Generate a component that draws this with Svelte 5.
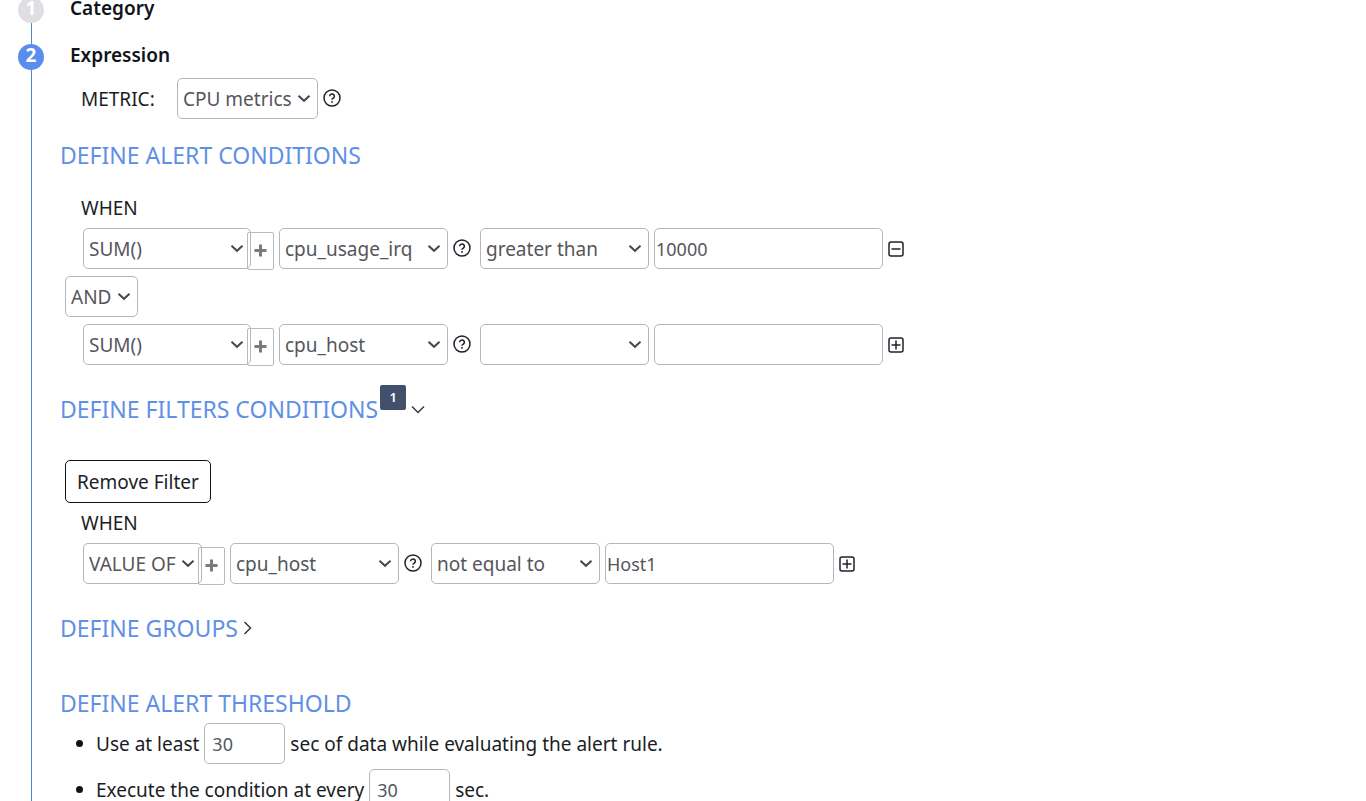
<script>
  let metric = $state('CPU metrics');
  let joiner = $state('AND');
  let conditions = $state([
    { id: 'c1', fn: 'SUM()', field: 'cpu_usage_irq', op: 'greater than', value: '10000', action: 'remove' },
    { id: 'c2', fn: 'SUM()', field: 'cpu_host', op: '', value: '', action: 'add' }
  ]);
  let filters = $state([
    { id: 'f1', fn: 'VALUE OF', field: 'cpu_host', op: 'not equal to', value: 'Host1', action: 'add' }
  ]);
  let period = $state('30');
  let every = $state('30');
</script>

{#snippet picker(value, label, kind)}
  <span class="picker {kind}">
    <select aria-label={label}><option>{value}</option></select>
    <svg class="caret" viewBox="0 0 14 9" aria-hidden="true"><path d="M1.500 1.800 7 6.800l5.500-5" /></svg>
  </span>
{/snippet}

{#snippet help()}
  <button class="icon help" type="button" aria-label="Help">
    <svg width="18" height="18" viewBox="0 0 18 18" aria-hidden="true">
      <circle cx="9" cy="9" r="8" />
      <path d="M6.600 7.200a2.400 2.200 0 1 1 3.800 1.800C9.500 9.600 9 9.900 9 10.700" />
      <circle class="dot" cx="9" cy="12.900" r="0.900" />
    </svg>
  </button>
{/snippet}

{#snippet rule(row, wide)}
  <div class="rule">
    {@render picker(row.fn, 'Function', wide ? 'fn' : 'auto')}
    <button class="plus" type="button" aria-label="Add function">
      <svg width="13" height="13" viewBox="0 0 13 13" aria-hidden="true"><path d="M6.500 0.500v12M0.500 6.500h12" /></svg>
    </button>
    {@render picker(row.field, 'Field', 'field')}
    {@render help()}
    {@render picker(row.op, 'Operator', 'field op')}
    <input class="value" type="text" aria-label="Value" bind:value={row.value} />
    <button class="icon" type="button" aria-label={row.action}>
      <svg width="16" height="16" viewBox="0 0 16 16" aria-hidden="true">
        <rect x="1" y="1" width="14" height="14" rx="2" />
        <path d={row.action === 'add' ? 'M3.500 8h9M8 3.500v9' : 'M3.500 8h9'} />
      </svg>
    </button>
  </div>
{/snippet}

<main>
  <section class="step">
    <div class="rail"><span class="marker idle">1</span></div>
    <div class="body"><h2>Category</h2></div>
  </section>

  <section class="step">
    <div class="rail"><span class="marker">2</span></div>
    <div class="body">
      <h2>Expression</h2>

      <div class="metric">
        <span class="caption">METRIC:</span>
        {@render picker(metric, 'Metric', 'auto')}
        {@render help()}
      </div>

      <h3 class="conditions">DEFINE ALERT CONDITIONS</h3>
      <p class="when">WHEN</p>
      <div class="rules">
        {@render rule(conditions[0], true)}
        <div class="joiner">{@render picker(joiner, 'Join', 'auto')}</div>
        {@render rule(conditions[1], true)}
      </div>

      <h3 class="filters">
        DEFINE FILTERS CONDITIONS<span class="badge">1</span>
        <svg class="chevron" width="14" height="9" viewBox="0 0 14 9" aria-hidden="true"><path d="M1 1.500 7 7.500l6-6" /></svg>
      </h3>
      <button class="remove" type="button">Remove Filter</button>
      <p class="when">WHEN</p>
      <div class="rules">{@render rule(filters[0], false)}</div>

      <h3 class="groups">
        DEFINE GROUPS
        <svg class="chevron" width="9" height="14" viewBox="0 0 9 14" aria-hidden="true"><path d="M1.500 1 7.500 7l-6 6" /></svg>
      </h3>

      <h3 class="threshold">DEFINE ALERT THRESHOLD</h3>
      <ul>
        <li>
          <label for="period">Use at least</label>
          <input id="period" class="seconds" type="text" bind:value={period} />
          <span>sec of data while evaluating the alert rule.</span>
        </li>
        <li>
          <label for="every">Execute the condition at every</label>
          <input id="every" class="seconds" type="text" bind:value={every} />
          <span>sec.</span>
        </li>
      </ul>
    </div>
  </section>
</main>

<style>
  :global(body) {
    margin: 0;
    background: #fff;
  }

  main {
    margin-top: -3px;
    padding-left: 18px;
    font: 19px/24px "Noto Sans", sans-serif;
    color: #1b1d25;
  }

  main * {
    box-sizing: border-box;
  }

  h2,
  h3,
  p,
  ul {
    margin: 0;
    padding: 0;
  }

  svg {
    display: block;
    fill: none;
    stroke: currentColor;
  }

  button,
  select,
  input {
    margin: 0;
    font: inherit;
    background: #fff;
  }

  .step {
    display: grid;
    grid-template-columns: 26px 1fr;
    column-gap: 16px;
    min-height: 47px;
  }

  .rail {
    display: flex;
    flex-direction: column;
    align-items: center;
  }

  .rail::after {
    content: "";
    flex: 1;
    width: 1px;
    background: #4f88cf;
  }

  .marker {
    width: 26px;
    height: 26px;
    border-radius: 50%;
    background: #5b8def;
    color: #fff;
    font-weight: 700;
    line-height: 23px;
    text-align: center;
  }

  .marker.idle {
    background: #dfdfe3;
  }

  h2 {
    padding-left: 10px;
    font-size: 19px;
    font-weight: 600;
    line-height: 22px;
    color: #11131a;
  }

  h3 {
    display: flex;
    align-items: center;
    font-size: 23px;
    font-weight: 400;
    line-height: 30px;
    color: #5f90e6;
  }

  .metric {
    display: flex;
    align-items: center;
    gap: 5px;
    margin-top: 12px;
    padding-left: 21px;
  }

  .caption {
    width: 91px;
  }

  .conditions {
    margin-top: 21px;
  }

  .when {
    margin: 26px 0 8px;
    padding-left: 21px;
  }

  .rules {
    display: grid;
    row-gap: 7px;
    padding-left: 23px;
  }

  .joiner {
    display: flex;
    margin-left: -18px;
  }

  .rule {
    display: flex;
    align-items: center;
    gap: 5px;
  }

  .picker {
    position: relative;
    display: inline-flex;
    flex: none;
  }

  .picker.fn {
    width: 168px;
  }

  .picker.field {
    width: 169px;
  }

  .picker.op {
    margin-left: 4px;
  }

  select,
  input {
    height: 41px;
    border: 1px solid #b5b6ba;
    border-radius: 5px;
    color: #55565b;
  }

  select {
    width: 100%;
    padding: 0 25px 0 5px;
    appearance: none;
  }

  input {
    font-size: 18px;
  }

  .caret {
    position: absolute;
    top: 16px;
    right: 7px;
    width: 14px;
    height: 9px;
    color: #47484d;
    stroke-width: 2;
    pointer-events: none;
  }

  .plus {
    display: grid;
    place-items: center;
    flex: none;
    width: 27px;
    height: 38px;
    margin: 4px 0 -1px -9px;
    padding: 0 0 2px;
    border: 1px solid #b9babd;
    border-radius: 2px;
    background: none;
    color: #7b7b7d;
    z-index: 1;
  }

  .plus svg {
    stroke-width: 3;
  }

  .icon {
    flex: none;
    padding: 0;
    border: 0;
    background: none;
    color: #20222a;
  }

  .icon svg {
    stroke-width: 1.5;
  }

  .help {
    margin-bottom: 2px;
  }

  .dot {
    fill: currentColor;
    stroke: none;
  }

  .value {
    width: 229px;
    padding: 0 1px;
  }

  .filters {
    margin-top: 29px;
  }

  .badge {
    align-self: flex-start;
    width: 26px;
    height: 25px;
    margin: -9px 0 0 2px;
    border-radius: 2px;
    background: #42506b;
    color: #fff;
    font-size: 13px;
    font-weight: 600;
    line-height: 25px;
    text-align: center;
  }

  .chevron {
    margin-left: 5px;
    color: #363840;
    stroke-width: 1.5;
  }

  .remove {
    display: block;
    height: 43px;
    margin: 36px 0 0 5px;
    padding: 0 11px;
    border: 1px solid #11131a;
    border-radius: 5px;
    color: #20222a;
  }

  .remove + .when {
    margin-top: 8px;
  }

  .groups {
    margin-top: 29px;
  }

  .threshold {
    margin-top: 45px;
  }

  ul {
    display: grid;
    row-gap: 5px;
    margin-top: 5px;
    list-style: none;
  }

  li {
    display: flex;
    align-items: center;
    gap: 5px;
    padding-left: 16px;
  }

  li::before {
    content: "";
    width: 7px;
    height: 7px;
    margin-right: 8px;
    border-radius: 50%;
    background: #11131a;
  }

  .seconds {
    width: 81px;
    padding: 0 7px;
  }
</style>
